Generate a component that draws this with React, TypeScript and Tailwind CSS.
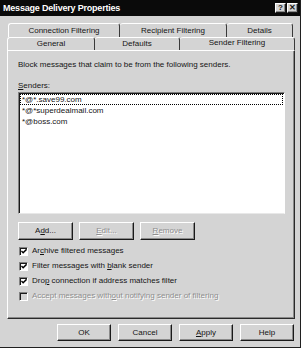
import React from "react";

const senders = ["*@*.save99.com", "*@*superdealmail.com", "*@boss.com"];

const options = [
  { pre: "Ar", key: "c", post: "hive filtered messages", checked: true, disabled: false },
  { pre: "Filter messages with ", key: "b", post: "lank sender", checked: true, disabled: false },
  { pre: "Dro", key: "p", post: " connection if address matches filter", checked: true, disabled: false },
  { pre: "Accept messages with", key: "o", post: "ut notifying sender of filtering", checked: false, disabled: true },
];

const Bevel = ({
  children,
  className,
  disabled,
}: {
  children: React.ReactNode;
  className: string;
  disabled?: boolean;
}) => (
  <div
    className={`flex items-center justify-center border border-t-white border-l-white border-r-[#1a1a1a] border-b-[#1a1a1a] shadow-[inset_-1px_-1px_0_#8a8a8a] ${className} ${
      disabled ? "text-[#8e8e8e] [text-shadow:1px_1px_0_#fff]" : "text-[#151515]"
    }`}
  >
    {children}
  </div>
);

const Tab = ({ label, className }: { label: string; className: string }) => (
  <div
    className={`h-full flex items-center justify-center border-t border-l border-t-white border-l-white border-r border-r-[#3a3a3a] rounded-t-[3px] ${className}`}
  >
    {label}
  </div>
);

const Check = ({ checked, disabled }: { checked: boolean; disabled: boolean }) => (
  <div
    className={`w-[9px] h-[9px] flex items-center justify-center border border-t-[#808080] border-l-[#808080] border-r-white border-b-white shadow-[inset_1px_1px_0_#1a1a1a] ${
      disabled ? "bg-[#d4d4d4]" : "bg-white"
    }`}
  >
    {checked && (
      <svg width="7" height="7" viewBox="0 0 7 7" className="ml-[1px] mt-[1px]">
        <path d="M0.5 3 L2.5 5 L6.5 1" stroke="#000" strokeWidth="1.6" fill="none" />
      </svg>
    )}
  </div>
);

const App = () => {
  return (
    <div className="w-[302px] h-[350px] bg-white font-['Liberation_Sans',Arial,sans-serif] text-[8px] leading-none text-[#151515] overflow-hidden">
      <div className="w-[301px] h-[348px] bg-[#d4d4d4] border-r border-b border-r-[#202020] border-b-[#202020] flex flex-col">
        {/* title bar */}
        <div className="h-[16px] bg-[#0a0a0a] flex items-center justify-between pl-[3px] pr-[2px]">
          <span className="text-white font-bold text-[9px] tracking-[-0.2px]">Message Delivery Properties</span>
          <div className="flex gap-[1px]">
            <Bevel className="w-[11px] h-[10px] bg-[#d4d4d4] font-bold text-[8px]">?</Bevel>
            <Bevel className="w-[11px] h-[10px] bg-[#d4d4d4] font-bold text-[8px]">✕</Bevel>
          </div>
        </div>

        {/* tabs */}
        <div className="mt-[7px] pl-[8px] h-[14px] flex">
          <Tab label="Connection Filtering" className="w-[112px]" />
          <Tab label="Recipient Filtering" className="w-[107px] border-l-0" />
          <Tab label="Details" className="w-[66px] border-l-0" />
        </div>
        <div className="pl-[7px] h-[13px] flex">
          <Tab label="General" className="w-[88px]" />
          <Tab label="Defaults" className="w-[85px] border-l-0" />
          <Tab label="Sender Filtering" className="w-[115px] border-l-0 pb-[2px] relative z-10 bg-[#d4d4d4]" />
        </div>

        {/* panel */}
        <div className="ml-[7px] w-[288px] h-[269px] border border-t-white border-l-white border-r-[#2a2a2a] border-b-[#2a2a2a] shadow-[inset_-1px_-1px_0_#8a8a8a] pl-[10px] pr-[8px] flex flex-col">
          <div className="mt-[10px]">Block messages that claim to be from the following senders.</div>
          <div className="mt-[13px]">
            <span className="underline">S</span>enders:
          </div>
          <div className="mt-[2px] w-[267px] h-[122px] bg-white border border-t-[#808080] border-l-[#808080] border-r-white border-b-[#e8e8e8] shadow-[inset_1px_1px_0_#1a1a1a] pt-[1px] pl-[1px]">
            {senders.map((s, i) => (
              <div
                key={s}
                className={`h-[11px] flex items-center pl-[1px] ${
                  i === 0 ? "border border-dotted border-black w-[263px]" : "ml-[1px]"
                }`}
              >
                {s}
              </div>
            ))}
          </div>
          <div className="mt-[8px] flex gap-[6px]">
            <Bevel className="w-[55px] h-[18px]">
              <span>
                A<span className="underline">d</span>d...
              </span>
            </Bevel>
            <Bevel className="w-[55px] h-[18px]" disabled>
              <span>
                <span className="underline">E</span>dit...
              </span>
            </Bevel>
            <Bevel className="w-[55px] h-[18px]" disabled>
              <span>
                <span className="underline">R</span>emove
              </span>
            </Bevel>
          </div>
          <div className="mt-[6px] flex flex-col gap-[5px] pl-[1px]">
            {options.map((o) => (
              <div key={o.pre} className="h-[10px] flex items-center gap-[4px]">
                <Check checked={o.checked} disabled={o.disabled} />
                <span className={o.disabled ? "text-[#8e8e8e] [text-shadow:1px_1px_0_#fff]" : ""}>
                  {o.pre}
                  <span className="underline">{o.key}</span>
                  {o.post}
                </span>
              </div>
            ))}
          </div>
        </div>

        {/* dialog buttons */}
        <div className="mt-[5px] pl-[57px] flex gap-[7px]">
          <Bevel className="w-[54px] h-[17px]">OK</Bevel>
          <Bevel className="w-[54px] h-[17px]">Cancel</Bevel>
          <Bevel className="w-[54px] h-[17px]">
            <span>
              <span className="underline">A</span>pply
            </span>
          </Bevel>
          <Bevel className="w-[54px] h-[17px]">Help</Bevel>
        </div>
      </div>
    </div>
  );
};

export default App;
